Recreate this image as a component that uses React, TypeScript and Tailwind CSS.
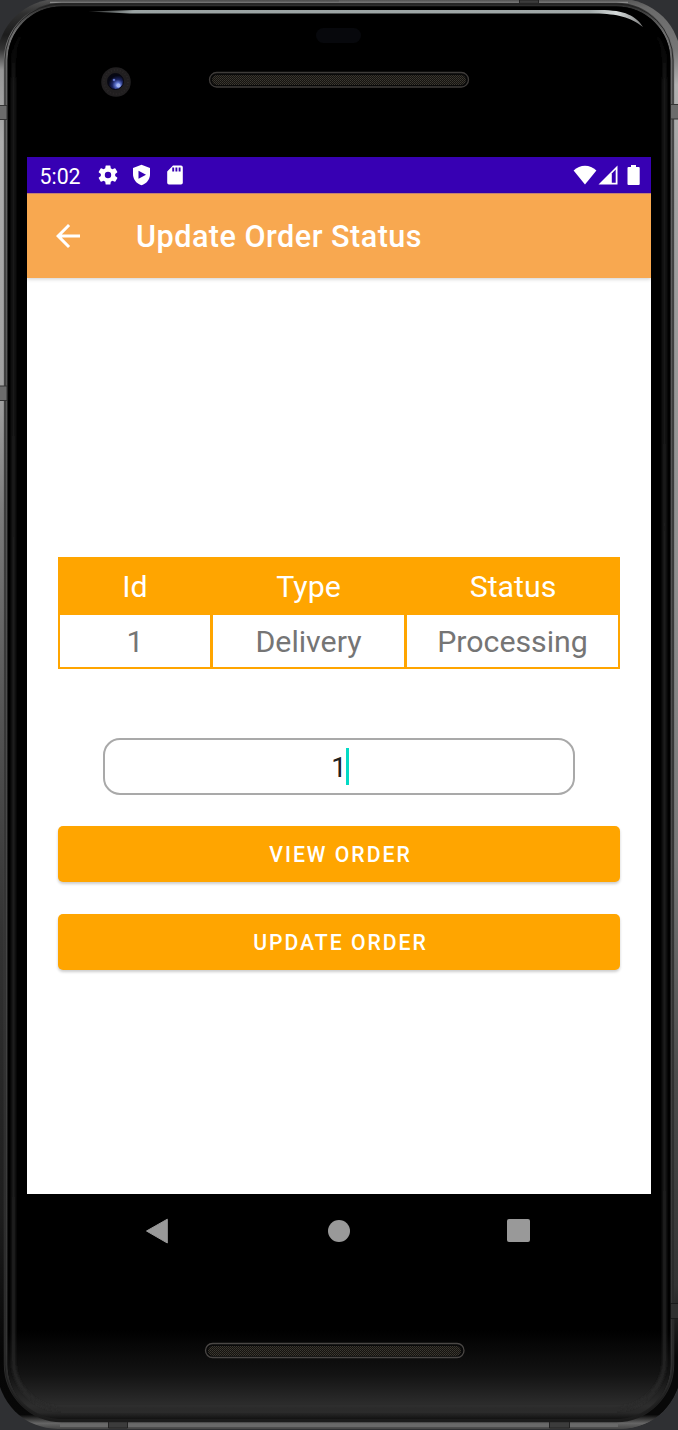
import React from "react";

function DeviceFrame() {
  return (
    <svg className="absolute inset-0" width="678" height="1430" viewBox="0 0 678 1430" aria-hidden="true">
      <defs>
        <linearGradient id="metal" x1="0" y1="0" x2="0" y2="1">
          <stop offset="0" stopColor="#555" />
          <stop offset="0.01" stopColor="#303030" />
          <stop offset="0.025" stopColor="#1c1c1c" />
          <stop offset="0.035" stopColor="#333" />
          <stop offset="0.05" stopColor="#999" />
          <stop offset="0.1" stopColor="#adadad" />
          <stop offset="0.28" stopColor="#a0a0a0" />
          <stop offset="0.36" stopColor="#7c7c7c" />
          <stop offset="0.5" stopColor="#555" />
          <stop offset="0.65" stopColor="#333" />
          <stop offset="0.85" stopColor="#1d1d1d" />
          <stop offset="0.95" stopColor="#050505" />
          <stop offset="0.99" stopColor="#080808" />
          <stop offset="0.996" stopColor="#666" />
          <stop offset="1" stopColor="#444" />
        </linearGradient>
        <linearGradient id="metalRight" x1="0" y1="0" x2="0" y2="1">
          <stop offset="0" stopColor="#555" />
          <stop offset="0.006" stopColor="#6a6a6a" />
          <stop offset="0.035" stopColor="#777" />
          <stop offset="0.06" stopColor="#b0b0b0" />
          <stop offset="0.13" stopColor="#a2a2a2" />
          <stop offset="0.4" stopColor="#909090" />
          <stop offset="0.6" stopColor="#777" />
          <stop offset="0.75" stopColor="#4c4c4c" />
          <stop offset="0.9" stopColor="#333" />
          <stop offset="0.95" stopColor="#080808" />
          <stop offset="0.99" stopColor="#080808" />
          <stop offset="0.996" stopColor="#666" />
          <stop offset="1" stopColor="#444" />
        </linearGradient>
        <linearGradient id="rim" x1="0" y1="0" x2="0" y2="1">
          <stop offset="0" stopColor="#2c2c2c" />
          <stop offset="0.02" stopColor="#707070" />
          <stop offset="0.06" stopColor="#666" />
          <stop offset="0.3" stopColor="#555" />
          <stop offset="0.7" stopColor="#444" />
          <stop offset="0.95" stopColor="#333" />
          <stop offset="1" stopColor="#1c1c1c" />
        </linearGradient>
        <linearGradient id="chin" x1="0" y1="1330" x2="0" y2="1419" gradientUnits="userSpaceOnUse">
          <stop offset="0" stopColor="#000" />
          <stop offset="0.5" stopColor="#131313" />
          <stop offset="0.85" stopColor="#2d2d2d" />
          <stop offset="0.93" stopColor="#282828" />
          <stop offset="1" stopColor="#121212" />
        </linearGradient>
        <linearGradient id="glow" x1="0" y1="30" x2="0" y2="1410" gradientUnits="userSpaceOnUse">
          <stop offset="0" stopColor="#222" stopOpacity="0" />
          <stop offset="0.04" stopColor="#222" />
          <stop offset="1" stopColor="#2a2a2a" />
        </linearGradient>
        <linearGradient id="shine" x1="88" y1="0" x2="645" y2="0" gradientUnits="userSpaceOnUse">
          <stop offset="0" stopColor="#222" />
          <stop offset="0.08" stopColor="#9aa3a3" />
          <stop offset="0.9" stopColor="#a0a8a8" />
          <stop offset="0.95" stopColor="#d5dada" />
          <stop offset="1" stopColor="#777" />
        </linearGradient>
        <radialGradient id="lens" cx="0.65" cy="0.72" r="0.7">
          <stop offset="0" stopColor="#b9cbff" />
          <stop offset="0.2" stopColor="#6279d4" />
          <stop offset="0.5" stopColor="#1a2360" />
          <stop offset="0.85" stopColor="#060713" />
        </radialGradient>
        <pattern id="mesh" width="2" height="2" patternUnits="userSpaceOnUse">
          <rect width="2" height="2" fill="#15130f" />
          <rect width="1" height="1" fill="#3c3932" />
          <rect x="1" y="1" width="1" height="1" fill="#34312b" />
        </pattern>
        <clipPath id="rightHalf">
          <rect x="339" width="339" height="1430" />
        </clipPath>
        <filter id="soften" filterUnits="userSpaceOnUse" x="0" y="0" width="678" height="1430">
          <feGaussianBlur stdDeviation="1.8" />
        </filter>
      </defs>

      <rect x="-3" y="-1" width="684" height="1430" rx="61" fill="url(#metal)" />
      <rect x="-3" y="-1" width="684" height="1430" rx="61" fill="url(#metalRight)" clipPath="url(#rightHalf)" />

      <path d="M50 2.500H628" stroke="#8a8a8a" strokeWidth="1.500" />
      <path d="M60 1425.500H618" stroke="#696969" strokeWidth="3" />
      <g fill="#3c3c3c" stroke="#222">
        <path d="M519.500 0V5H538.500V0Z" />
        <path d="M108.500 1420V1428H127.500V1420Z" />
        <path d="M549.500 1420V1428H569.500V1420Z" />
      </g>

      <rect x="5.700" y="4.700" width="666.600" height="1415.600" rx="56" fill="#000" stroke="url(#rim)" strokeWidth="3.800" />
      <rect x="5" y="4" width="668" height="1417" rx="56" fill="none" stroke="#1c1c1c" strokeWidth="0.800" />
      <g fill="#6b6b6b" stroke="#343434">
        <rect x="-1" y="105.500" width="8" height="14" />
        <rect x="-1" y="386" width="8" height="14.500" />
        <rect x="670.500" y="104.500" width="9" height="14.500" />
      </g>
      <rect x="670.500" y="1303.500" width="9" height="15" fill="#303030" stroke="#1a1a1a" />
      <rect x="7.700" y="6.500" width="662.600" height="1412.500" rx="54" fill="url(#chin)" />
      <rect x="13.500" y="13" width="651" height="1396" rx="49" fill="none" stroke="url(#glow)" strokeWidth="3" filter="url(#soften)" />

      <path d="M88 11.500L135 10H600C625 10 636 16 643 27C630 17 618 14 595 13.500H130Z" fill="url(#shine)" />
      <rect x="316" y="28" width="45" height="15" rx="7.500" fill="#07080c" />

      <circle cx="116" cy="82" r="14.800" fill="#211f20" />
      <circle cx="116" cy="82" r="12" fill="none" stroke="#2a2728" strokeWidth="2" strokeDasharray="1 2" />
      <circle cx="115.500" cy="81.500" r="8" fill="url(#lens)" stroke="#080811" />
      <circle cx="114" cy="80" r="1.300" fill="#6073c8" />
      <circle cx="118.500" cy="85.500" r="2" fill="#a4b6f0" />

      <rect x="209.500" y="72.500" width="259" height="14.500" rx="7.200" fill="#090909" stroke="#3f3c3a" strokeWidth="1.300" />
      <rect x="212" y="75" width="254" height="10" rx="5" fill="url(#mesh)" />
      <rect x="205.500" y="1343.500" width="258.500" height="14" rx="7" fill="#090909" stroke="#4a4745" strokeWidth="1.300" />
      <rect x="208" y="1346" width="253" height="10" rx="5" fill="url(#mesh)" />
    </svg>
  );
}

function StatusBar() {
  return (
    <div className="flex h-9 items-center bg-[#3700b3] pl-[12.500px] pr-[11.500px] text-white">
      <span className="w-[58.500px] pt-[3px] text-[21.300px] leading-9">5:02</span>
      <svg width="20" height="20" viewBox="2 2 20 20" fill="currentColor">
        <path d="M19.140 12.940c.04-.3.060-.610.060-.940s-.020-.640-.070-.940l2.030-1.580a.49.49 0 0 0 .12-.610l-1.920-3.320a.49.49 0 0 0-.590-.220l-2.390.960a7 7 0 0 0-1.620-.940l-.360-2.540a.48.48 0 0 0-.480-.410h-3.840a.48.48 0 0 0-.470.410l-.360 2.540c-.590.240-1.130.570-1.620.940l-2.390-.960a.49.49 0 0 0-.590.220L2.740 8.870a.48.48 0 0 0 .12.610l2.030 1.580a6 6 0 0 0 0 1.880l-2.030 1.580a.49.49 0 0 0-.12.610l1.920 3.320c.12.220.370.290.590.220l2.390-.960c.5.380 1.030.7 1.620.940l.360 2.540c.050.240.240.410.480.410h3.840c.240 0 .440-.170.470-.410l.360-2.540a7 7 0 0 0 1.620-.940l2.390.960c.220.080.470 0 .590-.220l1.920-3.320a.49.49 0 0 0-.12-.610zM12 15.200a3.200 3.200 0 1 1 0-6.400 3.200 3.200 0 0 1 0 6.400" />
      </svg>
      <svg className="ml-[14px]" width="19" height="22" viewBox="0 0 19 22">
        <path d="M9.500.7 18 4v6c0 5.300-3.400 9.700-8.500 11.300C4.400 19.700 1 15.300 1 10V4Z" fill="currentColor" />
        <path d="M6.500 6.700v8l7.500-4Z" fill="#3700b3" />
      </svg>
      <svg className="ml-[15px]" width="18" height="20" viewBox="0 0 18 20">
        <path d="M7 .5h8a1.800 1.800 0 0 1 1.800 1.800v15.400a1.800 1.800 0 0 1-1.800 1.800H3a1.800 1.800 0 0 1-1.800-1.800V6.500Z" fill="currentColor" />
        <path d="M7.200 2.500v4M10.400 2.500v4M13.600 2.500v4" stroke="#3700b3" strokeWidth="1.900" />
      </svg>
      <svg className="ml-auto" width="24" height="20" viewBox="0 0 24 20">
        <path d="M.6 5.500C7-.8 17-.8 23.400 5.500L12 19.500Z" fill="currentColor" />
      </svg>
      <svg className="ml-[1px]" width="20" height="20" viewBox="0 0 20 20">
        <path d="M.5 19.500 19.500.5V19.500Z" fill="currentColor" />
        <path d="M13.800 8.500 17.700 4.500V17.800H13.800Z" fill="#3700b3" />
      </svg>
      <svg className="ml-[9px]" width="13" height="20" viewBox="0 0 13 20">
        <path d="M4 0h5v2h2.700A1 1 0 0 1 12.700 3v16a1 1 0 0 1-1 1H1.500a1 1 0 0 1-1-1V3a1 1 0 0 1 1-1H4Z" fill="currentColor" />
      </svg>
    </div>
  );
}

function AppBar() {
  return (
    <header className="z-10 flex h-[85px] shrink-0 items-center border-t border-[#c18275] bg-[#f8a850] pl-[29px] text-white shadow-[0_1px_4px_rgba(0,0,0,0.2)]">
      <button aria-label="Back" className="w-20 text-left">
        <svg width="24" height="24" viewBox="4 4 16 16" fill="currentColor">
          <path d="M20 11H7.830l5.590-5.590L12 4l-8 8 8 8 1.410-1.410L7.830 13H20z" />
        </svg>
      </button>
      <h1 className="pt-[3px] text-[30.600px] font-medium leading-none tracking-[0.480px]">Update Order Status</h1>
    </header>
  );
}

const columns = ["Id", "Type", "Status"];
const order = ["1", "Delivery", "Processing"];

function OrderTable() {
  return (
    <div className="h-[112px] w-[562px] bg-[#ffa500] text-center text-[30.300px] leading-none">
      <div className="grid h-[58px] grid-cols-[153px_194px_215px] items-center text-white">
        {columns.map((name) => (
          <div key={name} className="pt-[2px] pl-[1px]">{name}</div>
        ))}
      </div>
      <div className="grid h-[54px] grid-cols-[153px_194px_215px] text-[#757575]">
        {order.map((value) => (
          <div key={value} className="flex items-center justify-center border-r border-b-2 border-l-2 border-[#ffa500] bg-white pt-[3px] last:border-r-2">{value}</div>
        ))}
      </div>
    </div>
  );
}

function ActionButton({ children }: { children: React.ReactNode }) {
  return (
    <button className="flex h-14 w-[562px] items-center justify-center rounded-[5px] bg-[#ffa500] pt-[2px] pl-[3px] text-[21.200px] font-medium leading-none tracking-[1.980px] text-white shadow-[0_2px_3px_rgba(0,0,0,0.2)]">
      {children}
    </button>
  );
}

function NavigationBar() {
  return (
    <nav className="flex h-[73px] items-center pl-[118px] text-[#999]">
      <svg width="24" height="26" viewBox="0 0 24 26">
        <path d="M1.500 13 22.300 1.200V25Z" fill="currentColor" stroke="currentColor" strokeLinejoin="round" />
      </svg>
      <div className="ml-[159px] size-[22px] rounded-full bg-[#999]" />
      <div className="ml-[157px] size-[23px] rounded-[2px] bg-[#999]" />
    </nav>
  );
}

export default function App() {
  return (
    <div className="relative h-[1430px] w-[678px] overflow-hidden bg-[#2f3033] font-['Roboto',sans-serif]">
      <DeviceFrame />
      <div className="relative flex h-full flex-col px-[27px] pt-[157px]">
        <div className="flex h-[1037px] flex-col bg-white">
          <StatusBar />
          <AppBar />
          <main className="flex flex-col items-center pt-[279px]">
            <OrderTable />
            <div className="mt-[69px] flex h-[57px] w-[472px] items-center justify-center rounded-[17px] border-2 border-[#a9a9a9] pl-[2px] text-[27.300px] leading-none text-[#202020]">
              <span className="pt-[4px]">1</span>
              <span className="-ml-[1px] h-[37px] w-[3px] bg-[#03dac5]" />
            </div>
            <div className="mt-[31px] flex flex-col gap-8">
              <ActionButton>VIEW ORDER</ActionButton>
              <ActionButton>UPDATE ORDER</ActionButton>
            </div>
          </main>
        </div>
        <NavigationBar />
      </div>
    </div>
  );
}
